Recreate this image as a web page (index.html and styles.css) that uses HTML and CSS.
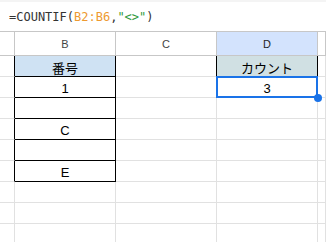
FILE: index.html
```html
<!DOCTYPE html>
<html lang="ja">
<head>
    <meta charset="UTF-8">
    <title>COUNTIF</title>
    <link rel="stylesheet" href="styles.css">
</head>
<body>
    <div class="formula-bar">=COUNTIF(<span class="ref">B2:B6</span>,<span class="str">"&lt;&gt;"</span>)</div>

    <div class="sheet">
        <!-- column headers -->
        <div class="head corner"></div>
        <div class="head">B</div>
        <div class="head">C</div>
        <div class="head active">D</div>
        <div class="head"></div>

        <!-- row 2 -->
        <div class="cell rowhead edge-r"></div>
        <div class="cell box title-b">番号</div>
        <div class="cell edge-r"></div>
        <div class="cell box title-d">カウント</div>
        <div class="cell"></div>

        <!-- row 3 -->
        <div class="cell rowhead edge-r"></div>
        <div class="cell box">1</div>
        <div class="cell"></div>
        <div class="cell selected">3</div>
        <div class="cell"></div>

        <!-- row 4 -->
        <div class="cell rowhead edge-r"></div>
        <div class="cell box"></div>
        <div class="cell"></div>
        <div class="cell"></div>
        <div class="cell"></div>

        <!-- row 5 -->
        <div class="cell rowhead edge-r"></div>
        <div class="cell box">C</div>
        <div class="cell"></div>
        <div class="cell"></div>
        <div class="cell"></div>

        <!-- row 6 -->
        <div class="cell rowhead edge-r"></div>
        <div class="cell box"></div>
        <div class="cell"></div>
        <div class="cell"></div>
        <div class="cell"></div>

        <!-- row 7 -->
        <div class="cell rowhead edge-r"></div>
        <div class="cell box">E</div>
        <div class="cell"></div>
        <div class="cell"></div>
        <div class="cell"></div>

        <!-- empty rows -->
        <div class="cell rowhead"></div>
        <div class="cell"></div>
        <div class="cell"></div>
        <div class="cell"></div>
        <div class="cell"></div>

        <div class="cell rowhead"></div>
        <div class="cell"></div>
        <div class="cell"></div>
        <div class="cell"></div>
        <div class="cell"></div>

        <div class="cell rowhead"></div>
        <div class="cell"></div>
        <div class="cell"></div>
        <div class="cell"></div>
        <div class="cell"></div>
    </div>
</body>
</html>
```

FILE: styles.css
```css
* {
    box-sizing: border-box;
}
body {
    margin: 0;
    background: #fff;
    overflow: hidden;
    font-family: 'Liberation Sans', Arial, 'Noto Sans CJK JP', sans-serif;
    color: #000;
}
.formula-bar {
    height: 32px;
    border-top: 2px solid #f4f4f4;
    border-bottom: 1px solid #c7c7c7;
    padding: 7px 0 0 9px;
    font-family: 'DejaVu Sans Mono', 'Liberation Mono', monospace;
    font-size: 12px;
    line-height: 16px;
    color: #333;
    white-space: nowrap;
}
.ref {
    color: #ee9a30;
}
.str {
    color: #2f9a3c;
}
.sheet {
    display: grid;
    grid-template-columns: 15px 101px 101px 101px 1fr;
    grid-template-rows: 24px;
    grid-auto-rows: 21px;
}
.head {
    border-right: 1px solid #c7c7c7;
    border-bottom: 1px solid #c7c7c7;
    background: #fff;
    font-size: 11px;
    color: #444;
    display: flex;
    align-items: center;
    justify-content: center;
    padding-top: 1px;
}
.head.active {
    background: #d3e3fd;
    color: #1f1f1f;
}
.cell {
    border-right: 1px solid #e1e1e1;
    border-bottom: 1px solid #e1e1e1;
    font-size: 13px;
    display: flex;
    align-items: center;
    justify-content: center;
    padding-top: 2px;
}
.edge-r {
    border-right-color: #000;
}
.box {
    border-right-color: #000;
    border-bottom-color: #000;
}
.title-b {
    background: #cfe2f3;
}
.title-d {
    background: #d0e0e3;
    border-right-color: #000;
    border-bottom-color: #000;
}
.selected {
    position: relative;
}
.selected::after {
    content: "";
    position: absolute;
    top: -1px;
    left: -1px;
    right: -1px;
    bottom: -1px;
    border: 2px solid #1a73e8;
}
.selected::before {
    content: "";
    position: absolute;
    right: -5px;
    bottom: -5px;
    width: 8px;
    height: 8px;
    border-radius: 50%;
    background: #1a73e8;
    z-index: 1;
}
```
